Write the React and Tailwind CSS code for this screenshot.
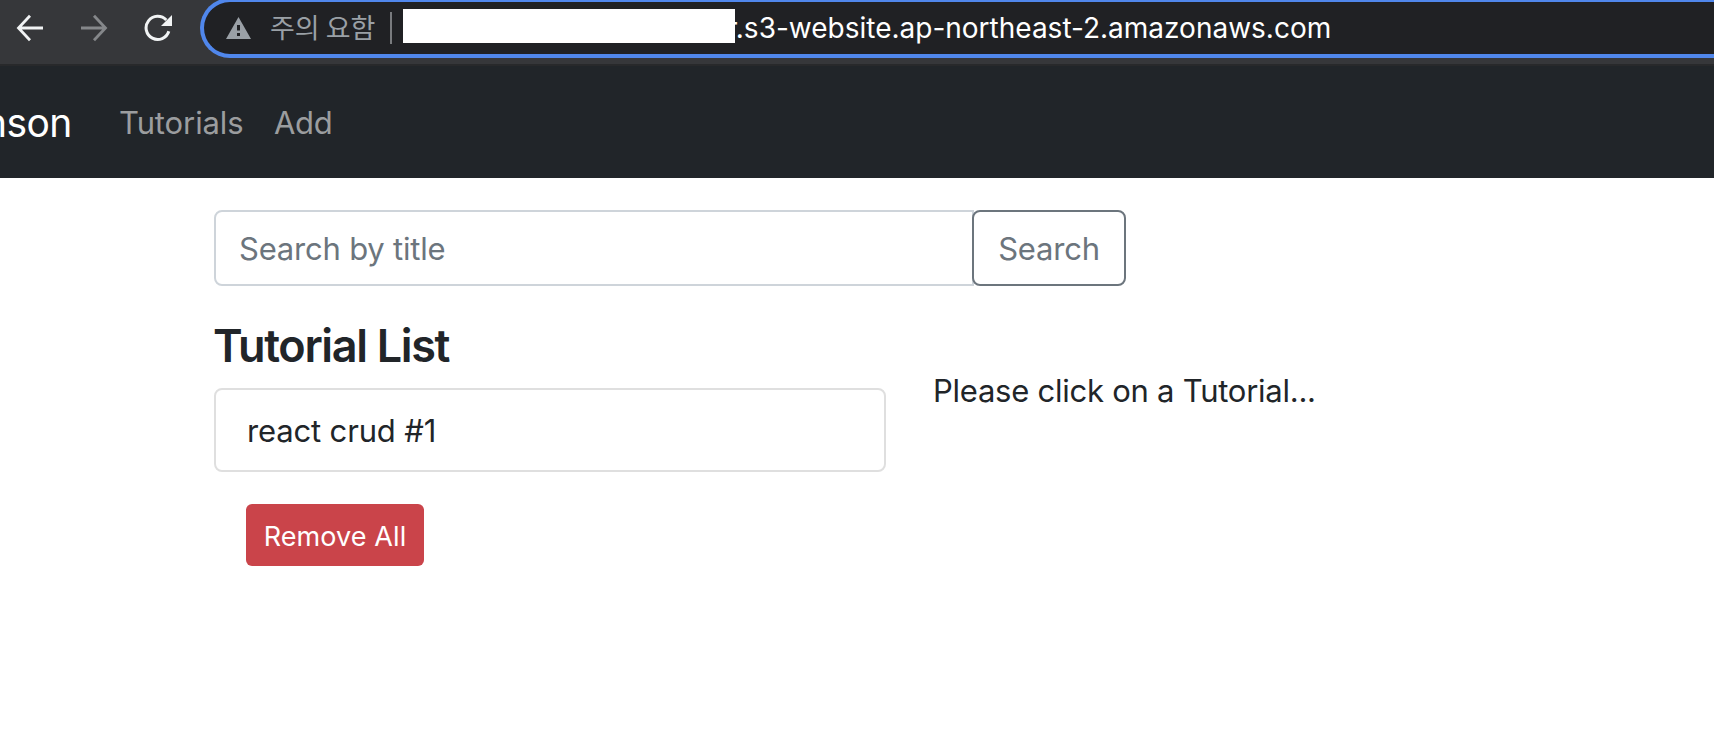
function BrowserBar() {
  return (
    <div className="flex h-[66px] items-start overflow-hidden border-b-2 border-[#28292b] bg-[#36373a]">
      <div className="flex h-[55px] w-[200px] shrink-0 items-center">
        <svg className="ml-[16px] h-[28px] w-[28px]" viewBox="0 0 28 28" fill="none" stroke="#f1f3f4" strokeWidth="2.8">
          <path d="M27 14H2.5M14 1.8L2.5 14L14 26.2" />
        </svg>
        <svg className="ml-[36px] h-[28px] w-[28px]" viewBox="0 0 28 28" fill="none" stroke="#85878a" strokeWidth="2.8">
          <path d="M1 14H25.5M14 1.8L25.5 14L14 26.2" />
        </svg>
        <svg className="ml-[36px] h-[28px] w-[28px]" viewBox="0 0 28 28" fill="none">
          <path d="M24.8 17.2A11.6 11.6 0 1 1 22.3 6.1" stroke="#f1f3f4" strokeWidth="3" />
          <path d="M28 1V12H17Z" fill="#f1f3f4" />
        </svg>
      </div>

      {/* Address field */}
      <div className="-mt-[2px] flex h-[60px] flex-1 items-center rounded-l-full border-4 border-r-0 border-[#5087ec] bg-[#202124]">
        <svg className="ml-[22px] h-[22px] w-[25px] shrink-0" viewBox="0 0 25 22" fill="#9aa0a6">
          <path fillRule="evenodd" d="M12.5 0L25 22H0ZM11 8V13.5H14V8ZM11 16V19H14V16Z" />
        </svg>
        <span className="-mt-[2px] ml-[19px] w-[104px] text-[27px] leading-[36px] whitespace-nowrap text-[#9aa0a6] font-['Noto_Sans_CJK_KR',sans-serif]">
          주의 요함
        </span>
        <span className="ml-[16px] h-[32px] w-[2px] bg-[#797b7e]" />
        {/* Masked bucket name */}
        <span className="z-10 -mt-[4px] ml-[11px] h-[34px] w-[332px] shrink-0 bg-white" />
        <span className="-ml-[8px] text-[28px] leading-[36px] whitespace-nowrap text-white">
          r.s3-website.ap-northeast-2.amazonaws.com
        </span>
      </div>
    </div>
  );
}

function Navbar() {
  return (
    <nav className="flex h-[112px] items-center overflow-hidden bg-[#212529] pt-[2px]">
      <a className="-ml-[16px] w-[135px] text-[39px] leading-[60px] tracking-[-0.6px] text-white">nson</a>
      <a className="w-[155px] text-[31px] leading-[48px] tracking-[-0.1px] text-[#9b9d9f]">Tutorials</a>
      <a className="text-[31px] leading-[48px] tracking-[-0.3px] text-[#9b9d9f]">Add</a>
    </nav>
  );
}

const tutorials = ['react crud #1'];

export default function App() {
  return (
    <div className="h-[744px] overflow-hidden bg-white text-[#212529] font-['Inter',sans-serif]">
      <BrowserBar />
      <Navbar />

      <main className="pt-[32px] pl-[214px]">
        {/* Search */}
        <div className="flex h-[76px]">
          <input
            type="text"
            placeholder="Search by title"
            className="w-[760px] rounded-l-lg border-2 border-[#ced4da] pt-[2px] pr-[24px] pl-[23px] text-[31px] leading-[48px] tracking-[-0.2px] placeholder:text-[#6c757d] placeholder:opacity-100 focus:outline-none"
          />
          <button className="-ml-[2px] w-[154px] rounded-lg border-2 border-[#6c757d] bg-white pt-[2px] text-[31px] leading-[48px] tracking-[-0.2px] text-[#6c757d]">
            Search
          </button>
        </div>

        <div className="flex">
          <div className="w-[672px] pt-[32px]">
            <h4 className="-mt-[1px] -ml-[1px] text-[45px] leading-[58px] font-semibold tracking-[-1.35px]">Tutorial List</h4>
            <ul className="mt-[13px] rounded-lg border-2 border-[#dfdfdf]">
              {tutorials.map((title) => (
                <li key={title} className="h-[80px] px-[31px] py-[17px] text-[31px] leading-[48px] tracking-[-0.15px]">
                  {title}
                </li>
              ))}
            </ul>
            <button className="mt-[32px] ml-[32px] h-[62px] w-[178px] rounded-md bg-[#ca444a] pt-[3px] text-[27px] leading-[42px] tracking-[0.1px] text-white">
              Remove All
            </button>
          </div>
          <p className="mt-[81px] ml-[47px] text-[31px] leading-[48px] tracking-[-0.25px] whitespace-nowrap">
            Please click on a Tutorial...
          </p>
        </div>
      </main>
    </div>
  );
}
